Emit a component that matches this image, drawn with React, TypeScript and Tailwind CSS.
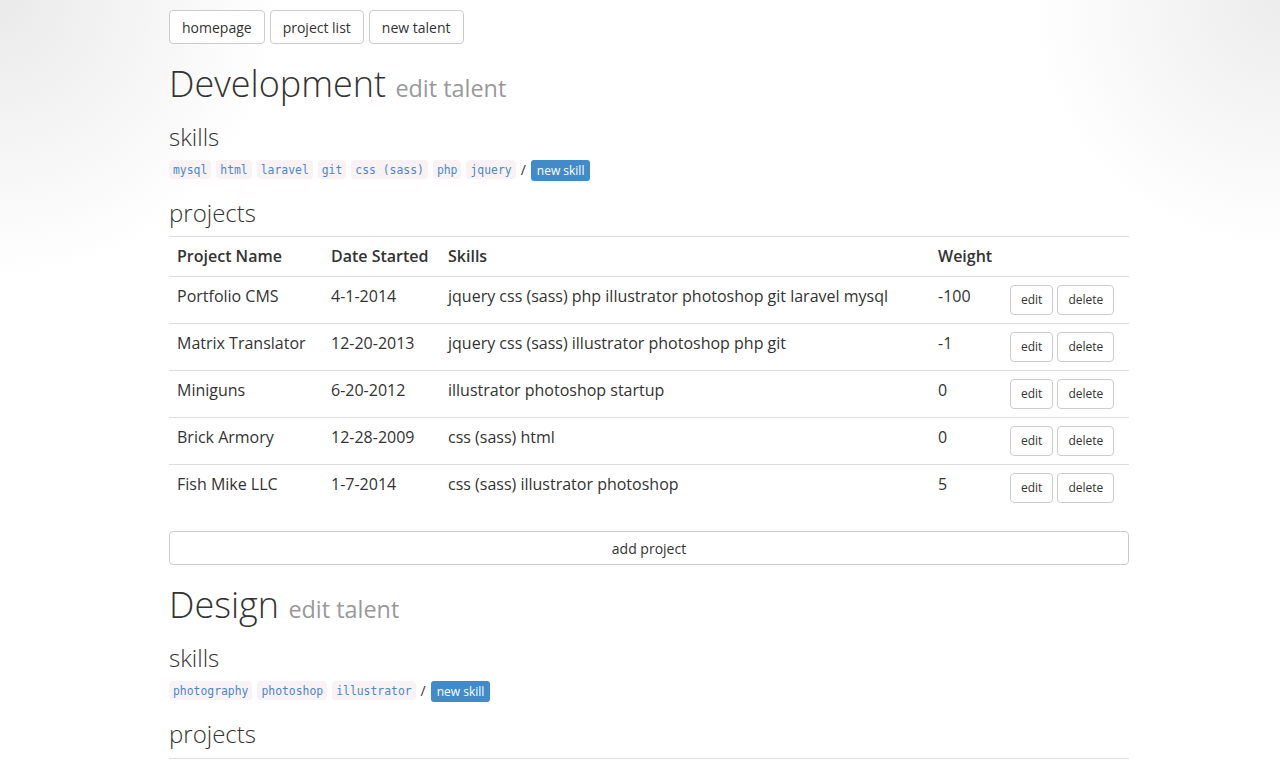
import React from "react";

type Project = {
  name: string;
  date: string;
  skills: string;
  weight: string;
};

type Talent = {
  title: string;
  skills: string[];
  projects: Project[];
};

const talents: Talent[] = [
  {
    title: "Development",
    skills: ["mysql", "html", "laravel", "git", "css (sass)", "php", "jquery"],
    projects: [
      { name: "Portfolio CMS", date: "4-1-2014", skills: "jquery css (sass) php illustrator photoshop git laravel mysql", weight: "-100" },
      { name: "Matrix Translator", date: "12-20-2013", skills: "jquery css (sass) illustrator photoshop php git", weight: "-1" },
      { name: "Miniguns", date: "6-20-2012", skills: "illustrator photoshop startup", weight: "0" },
      { name: "Brick Armory", date: "12-28-2009", skills: "css (sass) html", weight: "0" },
      { name: "Fish Mike LLC", date: "1-7-2014", skills: "css (sass) illustrator photoshop", weight: "5" },
    ],
  },
  {
    title: "Design",
    skills: ["photography", "photoshop", "illustrator"],
    projects: [
      { name: "Portfolio CMS", date: "4-1-2014", skills: "illustrator photoshop", weight: "-100" },
      { name: "Miniguns", date: "6-20-2012", skills: "illustrator photoshop photography", weight: "0" },
    ],
  },
];

const btn =
  "border border-[#cccccc] bg-white rounded-[4px] text-[#333333] hover:bg-[#e6e6e6]";

function ProjectTable({ projects }: { projects: Project[] }) {
  return (
    <table className="w-full border-collapse text-[16px] leading-[23px] text-[#333333] mb-[20px]">
      <colgroup>
        <col className="w-[154px]" />
        <col className="w-[117px]" />
        <col className="w-[490px]" />
        <col className="w-[72px]" />
        <col />
      </colgroup>
      <thead>
        <tr className="border-t border-b border-[#dddddd]">
          <th className="p-2 text-left font-semibold">Project Name</th>
          <th className="p-2 text-left font-semibold">Date Started</th>
          <th className="p-2 text-left font-semibold">Skills</th>
          <th className="p-2 text-left font-semibold">Weight</th>
          <th className="p-2"></th>
        </tr>
      </thead>
      <tbody>
        {projects.map((p, i) => (
          <tr key={p.name + i} className={i > 0 ? "border-t border-[#dddddd]" : ""}>
            <td className="p-2 align-top">{p.name}</td>
            <td className="p-2 align-top">{p.date}</td>
            <td className="p-2 align-top">{p.skills}</td>
            <td className="p-2 align-top">{p.weight}</td>
            <td className="p-2 align-top">
              <div className="flex gap-[4px]">
                <button className={`${btn} h-[30px] px-[10px] text-[12px] leading-[18px] rounded-[3px]`}>edit</button>
                <button className={`${btn} h-[30px] px-[10px] text-[12px] leading-[18px] rounded-[3px]`}>delete</button>
              </div>
            </td>
          </tr>
        ))}
      </tbody>
    </table>
  );
}

function TalentSection({ talent, last }: { talent: Talent; last: boolean }) {
  return (
    <div>
      <h1 className="mt-[20px] mb-[10px] text-[36px] leading-[1.1] font-light text-[#333333]">
        {talent.title}{" "}
        <small className="text-[23.4px] font-normal leading-none text-[#999999]">edit talent</small>
      </h1>
      <h3 className="mt-[20px] mb-[10px] text-[24px] leading-[1.1] font-light text-[#333333]">skills</h3>
      <div className="flex items-start gap-[5px] h-[20px] text-[14px] text-[#333333]">
        {talent.skills.map((s) => (
          <code
            key={s}
            className="h-[19px] px-[4px] leading-[20px] rounded-[4px] bg-[#f9f2f4] text-[#4a87c9] text-[11.4px] font-['DejaVu_Sans_Mono',monospace]"
          >
            {s}
          </code>
        ))}
        <span className="leading-[19px]">/</span>
        <span className="h-[21px] px-[6px] leading-[21px] rounded-[3px] bg-[#428bca] text-white text-[12px] font-normal">
          new skill
        </span>
      </div>
      <h3 className="mt-[20px] mb-[10px] text-[24px] leading-[1.1] font-light text-[#333333]">projects</h3>
      <ProjectTable projects={talent.projects} />
      <button className={`${btn} w-full h-[34px] text-[14px] ${last ? "mb-[20px]" : ""}`}>add project</button>
    </div>
  );
}

export default function App() {
  return (
    <div className="min-h-screen bg-white bg-[radial-gradient(circle_at_0_0,#eaeaea_0px,rgba(255,255,255,0)_280px),radial-gradient(circle_at_100%_0,#ececec_0px,rgba(255,255,255,0)_250px)] bg-no-repeat font-['Open_Sans',sans-serif] text-[#333333] flow-root">
      <div className="w-[960px] ml-[169px]">
        <div className="flex gap-[5px] pt-[10px]">
          <button className={`${btn} h-[34px] px-3 text-[14px]`}>homepage</button>
          <button className={`${btn} h-[34px] px-3 text-[14px]`}>project list</button>
          <button className={`${btn} h-[34px] px-3 text-[14px]`}>new talent</button>
        </div>
        {talents.map((t, i) => (
          <TalentSection key={t.title} talent={t} last={i === talents.length - 1} />
        ))}
      </div>
    </div>
  );
}
